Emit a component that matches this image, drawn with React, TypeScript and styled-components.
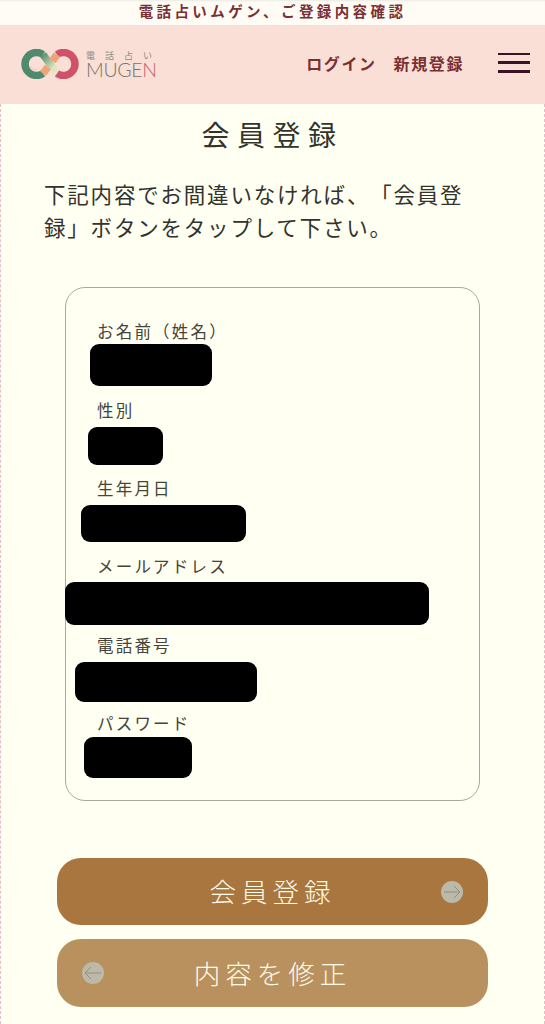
import styled, { createGlobalStyle } from 'styled-components';

const GlobalStyle = createGlobalStyle`
  html, body {
    margin: 0;
    padding: 0;
    height: 1024px;
    overflow: hidden;
    background: #fffff2;
    font-family: "Noto Sans CJK JP", "Noto Sans", sans-serif;
    text-spacing-trim: space-all;
  }
`;

const Page = styled.div`
  width: 545px;
`;

const Notice = styled.div`
  height: 25px;
  box-sizing: border-box;
  padding-bottom: 2px;
  display: flex;
  align-items: center;
  justify-content: center;
  background: #fffbf5;
  box-shadow: inset 0 2px 2px -1px rgba(0, 0, 0, 0.08);
  color: #7a3032;
  font-size: 14.5px;
  font-weight: 700;
  letter-spacing: 3.4px;
  line-height: 1;
`;

const Header = styled.header`
  height: 79px;
  display: flex;
  align-items: center;
  padding: 0 15px 4px 21px;
  box-sizing: border-box;
  background: #f9dfd6;
`;

const Logo = styled.div`
  display: flex;
  align-items: center;
  gap: 7px;
  margin-top: 3px;
`;

const LogoText = styled.div`
  display: flex;
  flex-direction: column;
`;

const LogoKana = styled.span`
  font-size: 9px;
  line-height: 11px;
  letter-spacing: 10px;
  color: #8d8d84;
  white-space: nowrap;
`;

const LogoName = styled.span`
  font-family: Lato, "Noto Sans", sans-serif;
  font-size: 19.5px;
  font-weight: 300;
  line-height: 18px;
  letter-spacing: -0.3px;
  color: #74756b;

  b {
    font-weight: 300;
    color: #c4606e;
  }
`;

const HeaderNav = styled.nav`
  margin-left: auto;
  display: flex;
  align-items: center;
  gap: 17px;
`;

const NavLink = styled.a`
  color: #7a3032;
  font-size: 16px;
  font-weight: 700;
  letter-spacing: 1.6px;
  line-height: 1;
`;

const MenuButton = styled.button`
  width: 32px;
  height: 20px;
  margin-left: 34px;
  padding: 0;
  border: 0;
  background: none;
  display: flex;
  flex-direction: column;
  justify-content: space-between;

  span {
    display: block;
    height: 2.5px;
    background: #3a1426;
  }
`;

const Main = styled.main`
  height: 920px;
  box-sizing: border-box;
  padding-top: 12px;
  border-left: 1px dashed #e9bccb;
  border-right: 1px dashed #e9bccb;
  background: #fffff2;
`;

const Title = styled.h1`
  margin: 0;
  text-align: center;
  color: #33332d;
  font-size: 28px;
  font-weight: 400;
  line-height: 36px;
  letter-spacing: 7.5px;
`;

const Intro = styled.p`
  margin: 25px 60px 0 43px;
  color: #33332d;
  font-size: 21.5px;
  line-height: 33px;
  letter-spacing: 1.8px;
`;

const Card = styled.section`
  width: 415px;
  height: 514px;
  box-sizing: border-box;
  margin: 44px 0 0 64px;
  padding-top: 32px;
  border: 1px solid #aaa898;
  border-radius: 20px;
`;

const Field = styled.div<{ $gap: number }>`
  margin-top: ${(p) => p.$gap}px;
`;

const FieldLabel = styled.div`
  margin-left: 31px;
  color: #44443c;
  font-size: 16.5px;
  line-height: 22px;
  letter-spacing: 2.2px;
`;

const Redacted = styled.div<{ $gap: number; $left: number; $width: number; $height: number }>`
  margin-top: ${(p) => p.$gap}px;
  margin-left: ${(p) => p.$left}px;
  width: ${(p) => p.$width}px;
  height: ${(p) => p.$height}px;
  background: #000;
  border-radius: 9px;
`;

const Actions = styled.div`
  display: flex;
  flex-direction: column;
  gap: 14px;
  margin: 57px 56px 0;
`;

const ActionButton = styled.button<{ $muted?: boolean }>`
  position: relative;
  height: ${(p) => (p.$muted ? 68 : 67)}px;
  padding: 0;
  border: 0;
  border-radius: 24px;
  background: ${(p) => (p.$muted ? '#b8915f' : '#a8763e')};
  color: #fffbe8;
  font-family: inherit;
  font-size: 26.5px;
  font-weight: 300;
  line-height: 1;
  letter-spacing: 5px;
`;

const ArrowBadge = styled.span<{ $side: 'left' | 'right' }>`
  position: absolute;
  top: 50%;
  ${(p) => p.$side}: 25px;
  width: 22px;
  height: 22px;
  margin-top: -11px;
  border-radius: 50%;
  background: #bdb9a9;
  display: flex;
  align-items: center;
  justify-content: center;
`;

const InfinityMark = () => (
  <svg width="58" height="30" viewBox="0 0 58 30" fill="none">
    <defs>
      <linearGradient id="cross" x1="20" y1="6" x2="38" y2="24" gradientUnits="userSpaceOnUse">
        <stop offset="0" stopColor="#4f8a6e" />
        <stop offset="0.7" stopColor="#dfe6bc" />
        <stop offset="1" stopColor="#efe6c8" />
      </linearGradient>
    </defs>
    <path d="M22 24.5 A11.5 11.5 0 1 1 22 5.5" stroke="#4f8a6e" strokeWidth="7.5" />
    <path d="M22 5.5 L36 24.5" stroke="url(#cross)" strokeWidth="7.5" />
    <path d="M36 5.5 A11.5 11.5 0 1 1 36 24.5" stroke="#d0526a" strokeWidth="7.5" />
    <path d="M22 24.5 L27 18" stroke="#eba578" strokeWidth="7.5" />
    <path d="M36 5.5 L31.5 12" stroke="#eba578" strokeWidth="7.5" />
    <path d="M9 17 A6 6 0 0 0 16 20.5" stroke="#f3c9c6" strokeWidth="1.2" strokeLinecap="round" />
    <path d="M43 9.5 A6 6 0 0 1 49 15" stroke="#d7e6d0" strokeWidth="1.2" strokeLinecap="round" />
  </svg>
);

const ArrowIcon = ({ flip }: { flip?: boolean }) => (
  <svg width="18" height="14" viewBox="0 0 18 14" fill="none" stroke="#8d8a80" strokeWidth="0.9">
    <path d={flip ? 'M17 7 H1 M7 1 L1 7 L7 13' : 'M1 7 H17 M11 1 L17 7 L11 13'} />
  </svg>
);

const fields = [
  { label: 'お名前（姓名）', gap: 0, barGap: 2, left: 24, width: 122, height: 42 },
  { label: '性別', gap: 13, barGap: 6, left: 22, width: 75, height: 38 },
  { label: '生年月日', gap: 12, barGap: 6, left: 15, width: 165, height: 37 },
  { label: 'メールアドレス', gap: 13, barGap: 5, left: -1, width: 364, height: 43 },
  { label: '電話番号', gap: 9, barGap: 6, left: 9, width: 182, height: 40 },
  { label: 'パスワード', gap: 10, barGap: 3, left: 18, width: 108, height: 41 },
];

export default function App() {
  return (
    <Page>
      <GlobalStyle />
      <Notice>電話占いムゲン、ご登録内容確認</Notice>
      <Header>
        <Logo>
          <InfinityMark />
          <LogoText>
            <LogoKana>電話占い</LogoKana>
            <LogoName>
              MUGE<b>N</b>
            </LogoName>
          </LogoText>
        </Logo>
        <HeaderNav>
          <NavLink>ログイン</NavLink>
          <NavLink>新規登録</NavLink>
        </HeaderNav>
        <MenuButton aria-label="メニュー">
          <span />
          <span />
          <span />
        </MenuButton>
      </Header>
      <Main>
        <Title>会員登録</Title>
        <Intro>下記内容でお間違いなければ、「会員登録」ボタンをタップして下さい。</Intro>
        <Card>
          {fields.map((f) => (
            <Field key={f.label} $gap={f.gap}>
              <FieldLabel>{f.label}</FieldLabel>
              <Redacted $gap={f.barGap} $left={f.left} $width={f.width} $height={f.height} />
            </Field>
          ))}
        </Card>
        <Actions>
          <ActionButton type="button">
            会員登録
            <ArrowBadge $side="right">
              <ArrowIcon />
            </ArrowBadge>
          </ActionButton>
          <ActionButton type="button" $muted>
            内容を修正
            <ArrowBadge $side="left">
              <ArrowIcon flip />
            </ArrowBadge>
          </ActionButton>
        </Actions>
      </Main>
    </Page>
  );
}
